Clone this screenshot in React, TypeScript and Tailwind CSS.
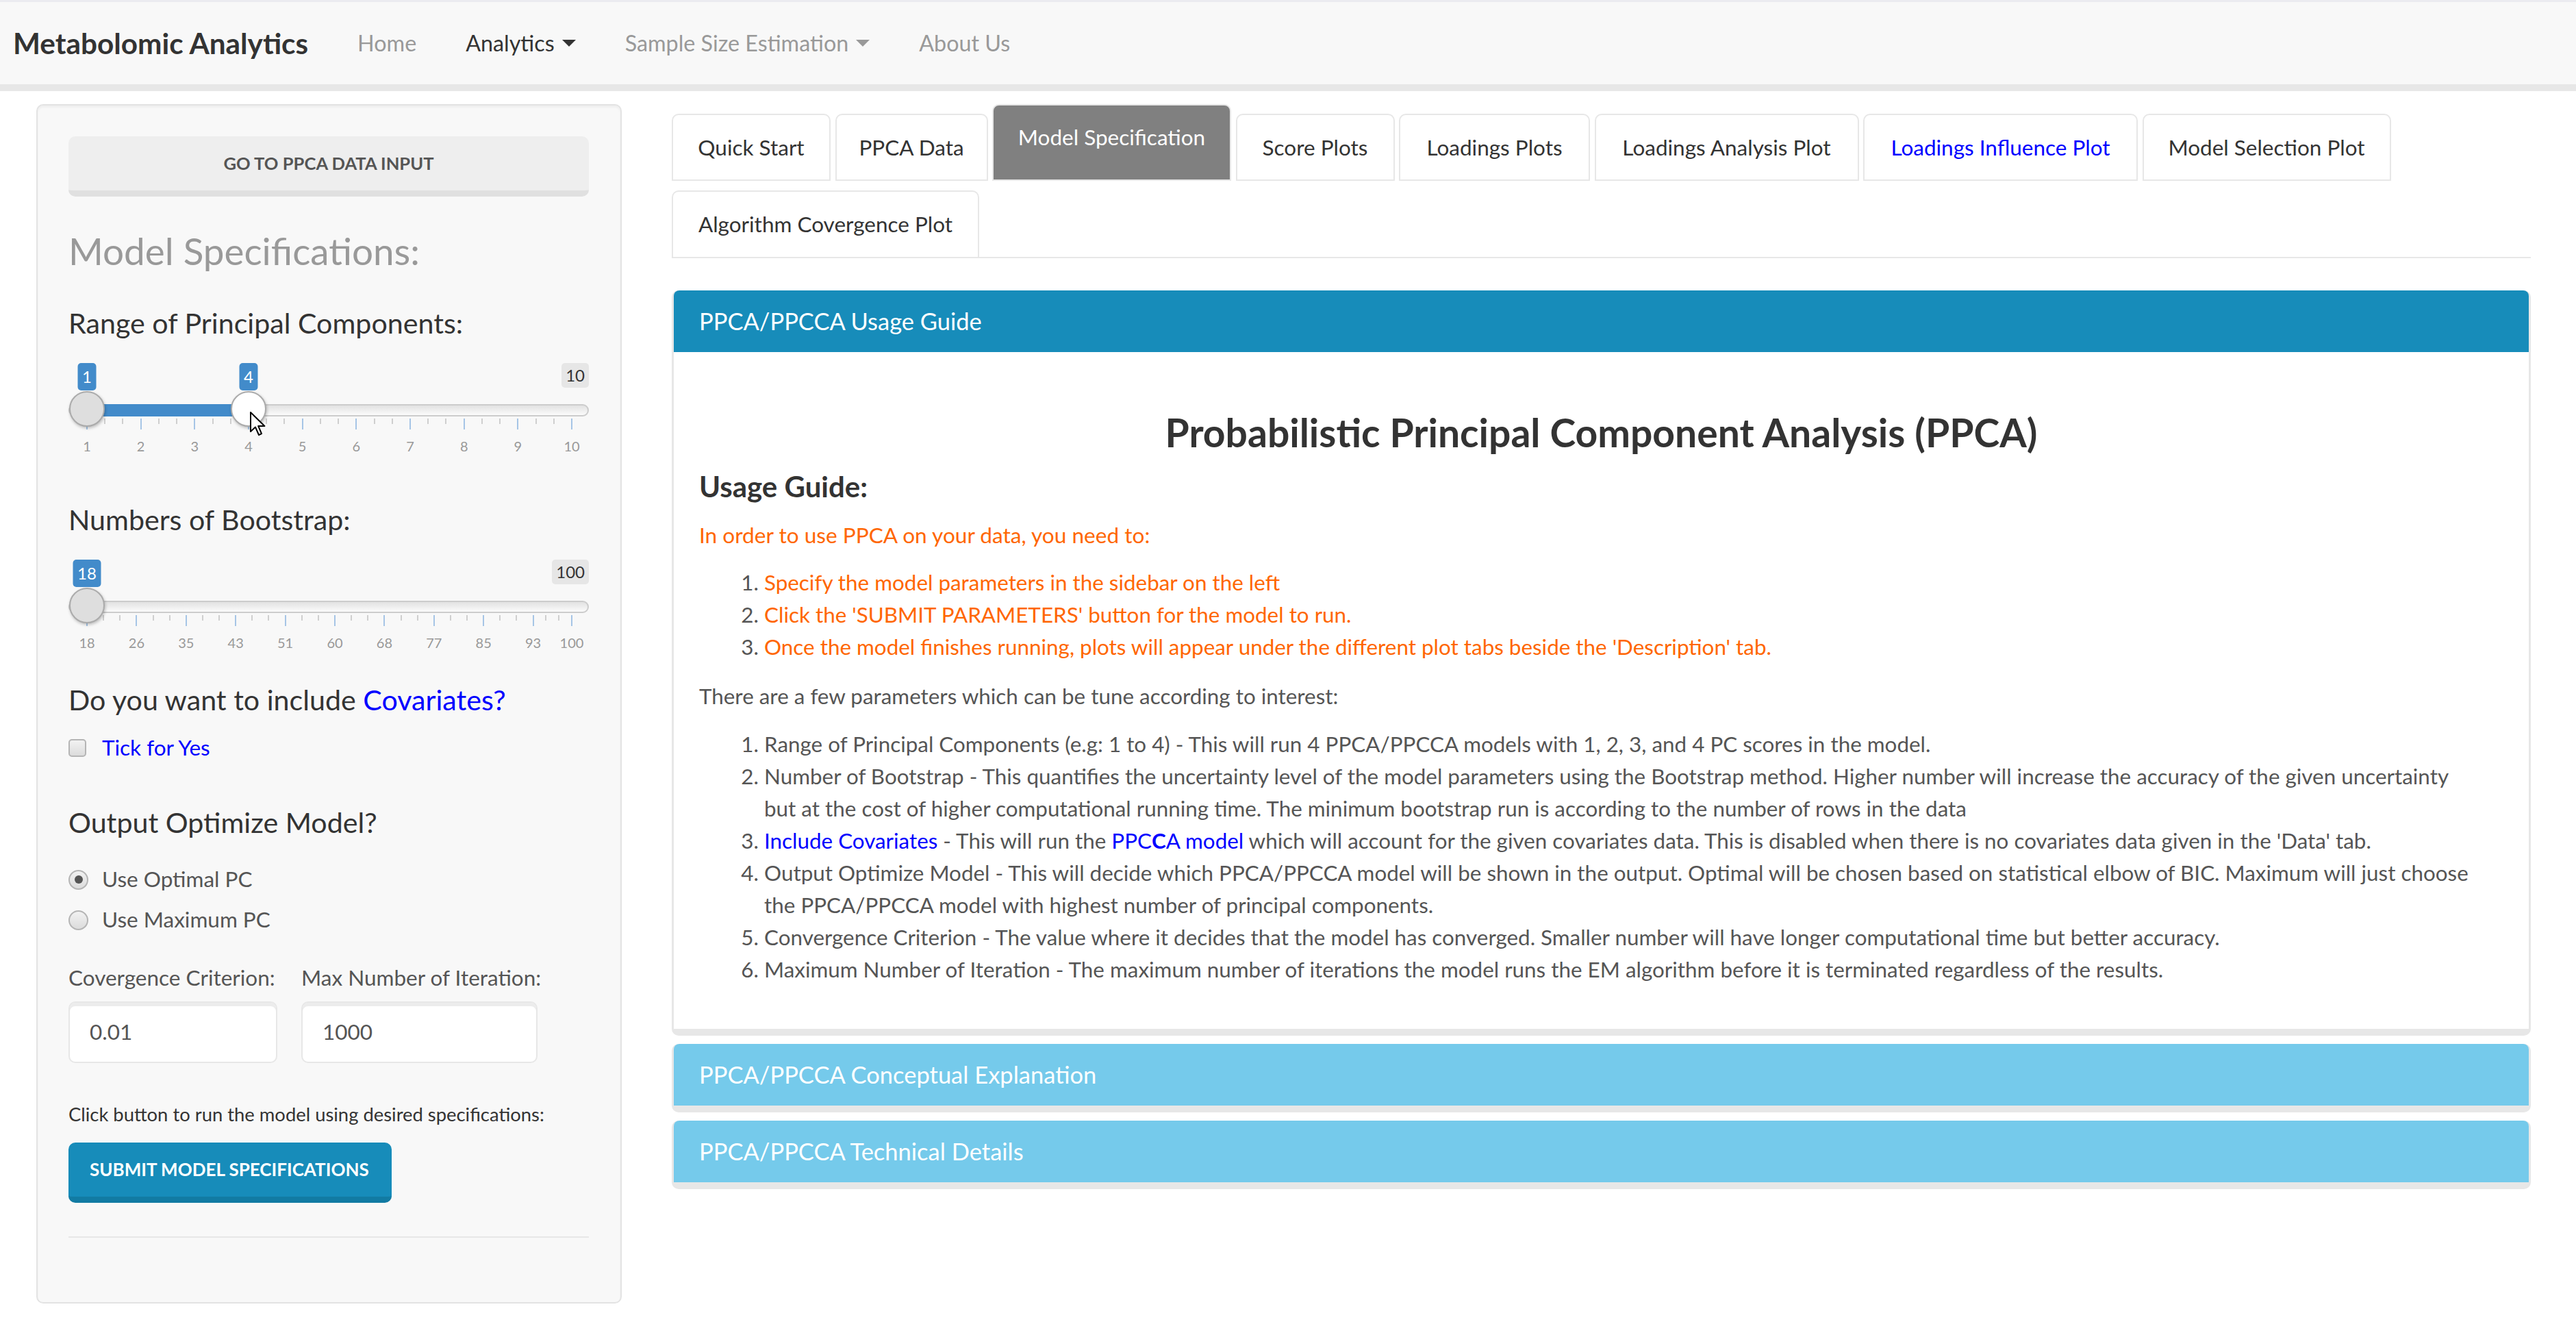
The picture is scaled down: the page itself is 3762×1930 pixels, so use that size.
import React from 'react';

const FONT = "font-['Lato','Liberation_Sans',sans-serif]";

function Caret({ dark }: { dark?: boolean }) {
  return (
    <span
      className={
        dark
          ? 'ml-[11px] inline-block h-0 w-0 border-x-[10px] border-t-[10px] border-x-transparent border-t-[#333333] align-middle'
          : 'ml-[11px] inline-block h-0 w-0 border-x-[10px] border-t-[10px] border-x-transparent border-t-[#999999] align-middle'
      }
    />
  );
}

function Navbar() {
  return (
    <nav className="flex h-[133px] items-center border-t-[3px] border-b-[10px] border-t-[#ebebf0] border-b-[#e7e7e7] bg-[#f8f8f8]">
      <span className="pl-[19px] pr-[36px] text-[42.3px] font-bold text-[#333333]">Metabolomic Analytics</span>
      <span className="px-[36px] text-[32.3px] text-[#999999]">Home</span>
      <span className="flex items-center px-[36px] text-[32.3px] text-[#333333]">
        Analytics
        <Caret dark />
      </span>
      <span className="flex items-center px-[36px] text-[32.3px] text-[#999999]">
        Sample Size Estimation
        <Caret />
      </span>
      <span className="px-[36px] text-[32.3px] text-[#999999]">About Us</span>
    </nav>
  );
}

interface SliderProps {
  ticks: number[];
  labels: string[];
  from: number;
  to?: number;
  fromLabel: string;
  toLabel?: string;
  maxLabel: string;
  badgeWidth: number;
  cursor?: boolean;
}

function RangeSlider({ ticks, labels, from, to, fromLabel, toLabel, maxLabel, badgeWidth, cursor }: SliderProps) {
  const minors: number[] = [];
  for (let i = 0; i < ticks.length - 1; i++) {
    const step = (ticks[i + 1] - ticks[i]) / 3;
    minors.push(ticks[i] + step, ticks[i] + 2 * step);
  }
  const end = to ?? from;
  return (
    <div className="relative h-[140px] w-[760px]">
      <div className="absolute left-0 top-[60px] h-[18px] w-[760px] rounded-full border-2 border-[#cccccc] bg-gradient-to-b from-[#e2e2e2] to-[#fbfbfb]" />
      {to !== undefined && (
        <div className="absolute top-[60px] h-[18px] bg-[#428bca]" style={{ left: from, width: to - from }} />
      )}
      {ticks.map((x) => (
        <div key={'M' + x} className="absolute top-[81px] h-[16px] w-[2px] bg-[#a6c5e6]" style={{ left: x - 1 }} />
      ))}
      {minors.map((x) => (
        <div key={'m' + x} className="absolute top-[81px] h-[8px] w-[2px] bg-[#cfcfcf]" style={{ left: x - 1 }} />
      ))}
      {labels.map((t, i) => (
        <span
          key={t}
          className="absolute top-[109px] -translate-x-1/2 text-[20px] leading-[24px] text-[#999999]"
          style={{ left: ticks[i] }}
        >
          {t}
        </span>
      ))}
      <div className="absolute top-[41px] h-[52px] w-[52px] rounded-full border-2 border-[#ababab] bg-[#dedede] shadow-[1px_2px_4px_rgba(0,0,0,0.25)]" style={{ left: from - 26 }} />
      {to !== undefined && (
        <div className="absolute top-[41px] h-[52px] w-[52px] rounded-full border-2 border-[#ababab] bg-white shadow-[1px_2px_4px_rgba(0,0,0,0.25)]" style={{ left: end - 26 }} />
      )}
      <span
        className="absolute top-0 flex h-[40px] -translate-x-1/2 items-center justify-center rounded-[5px] bg-[#428bca] text-[24px] text-white"
        style={{ left: from, width: badgeWidth }}
      >
        {fromLabel}
      </span>
      {toLabel && (
        <span
          className="absolute top-0 flex h-[40px] -translate-x-1/2 items-center justify-center rounded-[5px] bg-[#428bca] text-[24px] text-white"
          style={{ left: end, width: badgeWidth }}
        >
          {toLabel}
        </span>
      )}
      <span className="absolute right-0 top-0 flex h-[36px] items-center rounded-[5px] bg-[#e6e6e6] px-[6px] text-[24px] text-[#333333]">
        {maxLabel}
      </span>
      {cursor && (
        <svg className="absolute left-[264px] top-[70px]" width="26" height="38" viewBox="0 0 13 19">
          <path d="M1 1 L1 15 L4.5 11.8 L7 17.5 L9 16.6 L6.6 11 L11.2 11 Z" fill="white" stroke="black" strokeWidth="1" strokeLinejoin="round" />
        </svg>
      )}
    </div>
  );
}

function Radio({ checked, label, className }: { checked?: boolean; label: string; className?: string }) {
  return (
    <div className={`flex h-[48px] items-center ${className ?? ''}`}>
      <span className="flex h-[29px] w-[29px] items-center justify-center rounded-full border-2 border-[#b5b5b5] bg-gradient-to-b from-[#f2f2f2] to-[#dcdcdc]">
        {checked && <span className="h-[12px] w-[12px] rounded-full bg-[#555555]" />}
      </span>
      <span className="ml-[20px] text-[31.5px] text-[#555555]">{label}</span>
    </div>
  );
}

function Sidebar() {
  const t1 = Array.from({ length: 10 }, (_, i) => 27 + i * 78.67);
  const t2 = [...Array.from({ length: 10 }, (_, i) => 27 + i * 72.4), 735];
  return (
    <aside className="flex h-[1751px] w-[855px] shrink-0 flex-col rounded-[10px] border-2 border-[#e3e3e3] bg-[#f8f8f8] px-[45px] pt-[45px] shadow-[inset_0_3px_3px_rgba(0,0,0,0.04)]">
      <button className="h-[88px] w-[760px] rounded-[10px] border-b-[9px] border-[#e0e0e0] bg-[#eeeeee] text-[25.6px] font-bold uppercase text-[#555555]">
        Go to PPCA Data Input
      </button>
      <h3 className="mt-[47px] h-[64px] text-[54.8px] leading-[64px] text-[#999999]">Model Specifications:</h3>
      <div className="mt-[49px] h-[48px] text-[41.2px] leading-[48px] text-[#333333]">Range of Principal Components:</div>
      <div className="mt-[35px]">
        <RangeSlider ticks={t1} labels={['1', '2', '3', '4', '5', '6', '7', '8', '9', '10']} from={t1[0]} to={t1[3]} fromLabel="1" toLabel="4" maxLabel="10" badgeWidth={27} cursor />
      </div>
      <div className="mt-[64px] h-[48px] text-[41.2px] leading-[48px] text-[#333333]">Numbers of Bootstrap:</div>
      <div className="mt-[35px]">
        <RangeSlider ticks={t2} labels={['18', '26', '35', '43', '51', '60', '68', '77', '85', '93', '100']} from={t2[0]} fromLabel="18" maxLabel="100" badgeWidth={41} />
      </div>
      <div className="mt-[40px] h-[48px] text-[41.2px] leading-[48px] text-[#333333]">
        Do you want to include <span className="text-[#0000ff]">Covariates?</span>
      </div>
      <div className="mt-[23px] flex h-[48px] items-center">
        <span className="h-[26px] w-[26px] rounded-[5px] border-2 border-[#b5b5b5] bg-gradient-to-b from-[#f2f2f2] to-[#dcdcdc]" />
        <span className="ml-[23px] text-[31.5px] text-[#0000ff]">Tick for Yes</span>
      </div>
      <div className="mt-[60px] h-[48px] text-[41.2px] leading-[48px] text-[#333333]">Output Optimize Model?</div>
      <Radio checked label="Use Optimal PC" className="mt-[36px]" />
      <Radio label="Use Maximum PC" className="mt-[11px]" />
      <div className="mt-[36px] flex gap-[35px]">
        <div className="w-[305px]">
          <div className="h-[48px] whitespace-nowrap text-[31.5px] leading-[48px] text-[#555555]">Covergence Criterion:</div>
          <div className="mt-[11px] flex h-[90px] items-center rounded-[10px] border-2 border-[#e7e7e7] bg-white pl-[29px] text-[31.5px] text-[#555555] shadow-[inset_0_5px_0_#ececec]">
            0.01
          </div>
        </div>
        <div className="w-[345px]">
          <div className="h-[48px] whitespace-nowrap text-[31.5px] leading-[48px] text-[#555555]">Max Number of Iteration:</div>
          <div className="mt-[11px] flex h-[90px] items-center rounded-[10px] border-2 border-[#e7e7e7] bg-white pl-[29px] text-[31.5px] text-[#555555] shadow-[inset_0_5px_0_#ececec]">
            1000
          </div>
        </div>
      </div>
      <div className="mt-[55px] h-[40px] text-[27.4px] leading-[40px] text-[#333333]">
        Click button to run the model using desired specifications:
      </div>
      <button className="mt-[21px] h-[88px] w-[472px] rounded-[10px] border-b-[9px] border-[#127ba3] bg-[#178cba] pl-[31px] text-left text-[26px] font-bold uppercase text-white">
        Submit Model Specifications
      </button>
      <div className="mt-[49px] h-[2px] w-[760px] bg-[#e7e7e7]" />
    </aside>
  );
}

const TABS: { label: string; w: number; active?: boolean; blue?: boolean }[] = [
  { label: 'Quick Start', w: 232 },
  { label: 'PPCA Data', w: 223 },
  { label: 'Model Specification', w: 349, active: true },
  { label: 'Score Plots', w: 232 },
  { label: 'Loadings Plots', w: 279 },
  { label: 'Loadings Analysis Plot', w: 386 },
  { label: 'Loadings Influence Plot', w: 401, blue: true },
  { label: 'Model Selection Plot', w: 363 },
];

function Tab({ label, w, active, blue }: { label: string; w: number; active?: boolean; blue?: boolean }) {
  if (active) {
    return (
      <div className="h-[112px] shrink-0 rounded-t-[10px] border-2 border-[#e7e7e7] bg-[#808080] pt-[22px] text-center text-[31.5px] leading-[48px] text-white" style={{ width: w }}>
        {label}
      </div>
    );
  }
  return (
    <div
      className={
        blue
          ? 'h-[98px] shrink-0 rounded-t-[10px] border-2 border-[#e7e7e7] bg-white pt-[23px] text-center text-[31.5px] leading-[48px] text-[#0000ff]'
          : 'h-[98px] shrink-0 rounded-t-[10px] border-2 border-[#e7e7e7] bg-white pt-[23px] text-center text-[31.5px] leading-[48px] text-[#333333]'
      }
      style={{ width: w }}
    >
      {label}
    </div>
  );
}

function PanelHeader({ title, info }: { title: string; info?: boolean }) {
  return (
    <div
      className={
        info
          ? 'flex h-[90px] items-center rounded-t-[8px] bg-[#75caeb] px-[37px] text-[34.5px] text-white'
          : 'flex h-[90px] items-center rounded-t-[8px] bg-[#178cba] px-[37px] text-[34.5px] text-white'
      }
    >
      {title}
    </div>
  );
}

function MainPanel() {
  return (
    <main className="w-[2715px] shrink-0">
      <div className="flex items-end gap-[6.5px]">
        {TABS.map((t) => (
          <Tab key={t.label} {...t} />
        ))}
      </div>
      <div className="mt-[14px] flex border-b-2 border-[#e7e7e7]">
        <div className="h-[97px] w-[449px] rounded-t-[10px] border-x-2 border-t-2 border-[#e7e7e7] bg-white pt-[23px] text-center text-[31.5px] leading-[48px] text-[#333333]">
          Algorithm Covergence Plot
        </div>
      </div>

      <section className="mt-[47px] rounded-[10px] border-x-[3px] border-b-[10px] border-[#e7e7e7] bg-white">
        <PanelHeader title="PPCA/PPCCA Usage Guide" />
        <div className="px-[37px] pb-[63px]">
          <h3 className="mt-[85px] h-[64px] text-center text-[57px] font-bold leading-[64px] text-[#333333]">
            Probabilistic Principal Component Analysis (PPCA)
          </h3>
          <h4 className="mt-[23px] h-[48px] text-[42px] font-bold leading-[48px] text-[#333333]">Usage Guide:</h4>
          <p className="mt-[23px] text-[31.6px] leading-[48px] text-[#ff6600]">In order to use PPCA on your data, you need to:</p>
          <ol className="mt-[22px] list-decimal pl-[95px] text-[31.4px] leading-[47px] text-[#ff6600] marker:text-[#555555]">
            <li>Specify the model parameters in the sidebar on the left</li>
            <li>Click the 'SUBMIT PARAMETERS' button for the model to run.</li>
            <li>Once the model finishes running, plots will appear under the different plot tabs beside the 'Description' tab.</li>
          </ol>
          <p className="mt-[24px] text-[31.4px] leading-[48px] text-[#555555]">There are a few parameters which can be tune according to interest:</p>
          <ol className="mt-[23px] list-decimal pl-[95px] text-[31.4px] leading-[47px] text-[#555555]">
            <li>Range of Principal Components (e.g: 1 to 4) - This will run 4 PPCA/PPCCA models with 1, 2, 3, and 4 PC scores in the model.</li>
            <li>
              Number of Bootstrap - This quantifies the uncertainty level of the model parameters using the Bootstrap method. Higher number will increase the accuracy of the given uncertainty
              <br />
              but at the cost of higher computational running time. The minimum bootstrap run is according to the number of rows in the data
            </li>
            <li>
              <span className="text-[#0000ff]">Include Covariates</span> - This will run the{' '}
              <span className="text-[#0000ff]">
                PPC<b>C</b>A model
              </span>{' '}
              which will account for the given covariates data. This is disabled when there is no covariates data given in the 'Data' tab.
            </li>
            <li>
              Output Optimize Model - This will decide which PPCA/PPCCA model will be shown in the output. Optimal will be chosen based on statistical elbow of BIC. Maximum will just choose
              <br />
              the PPCA/PPCCA model with highest number of principal components.
            </li>
            <li>Convergence Criterion - The value where it decides that the model has converged. Smaller number will have longer computational time but better accuracy.</li>
            <li>Maximum Number of Iteration - The maximum number of iterations the model runs the EM algorithm before it is terminated regardless of the results.</li>
          </ol>
        </div>
      </section>

      <section className="mt-[12px] rounded-[10px] border-x-[3px] border-b-[10px] border-[#e7e7e7]">
        <PanelHeader title="PPCA/PPCCA Conceptual Explanation" info />
      </section>
      <section className="mt-[12px] rounded-[10px] border-x-[3px] border-b-[10px] border-[#e7e7e7]">
        <PanelHeader title="PPCA/PPCCA Technical Details" info />
      </section>
    </main>
  );
}

export default function App() {
  return (
    <div className={`min-h-screen w-[3762px] bg-white ${FONT}`}>
      <Navbar />
      <div className="flex gap-[73px] pl-[53px] pt-[19px]">
        <Sidebar />
        <MainPanel />
      </div>
    </div>
  );
}
